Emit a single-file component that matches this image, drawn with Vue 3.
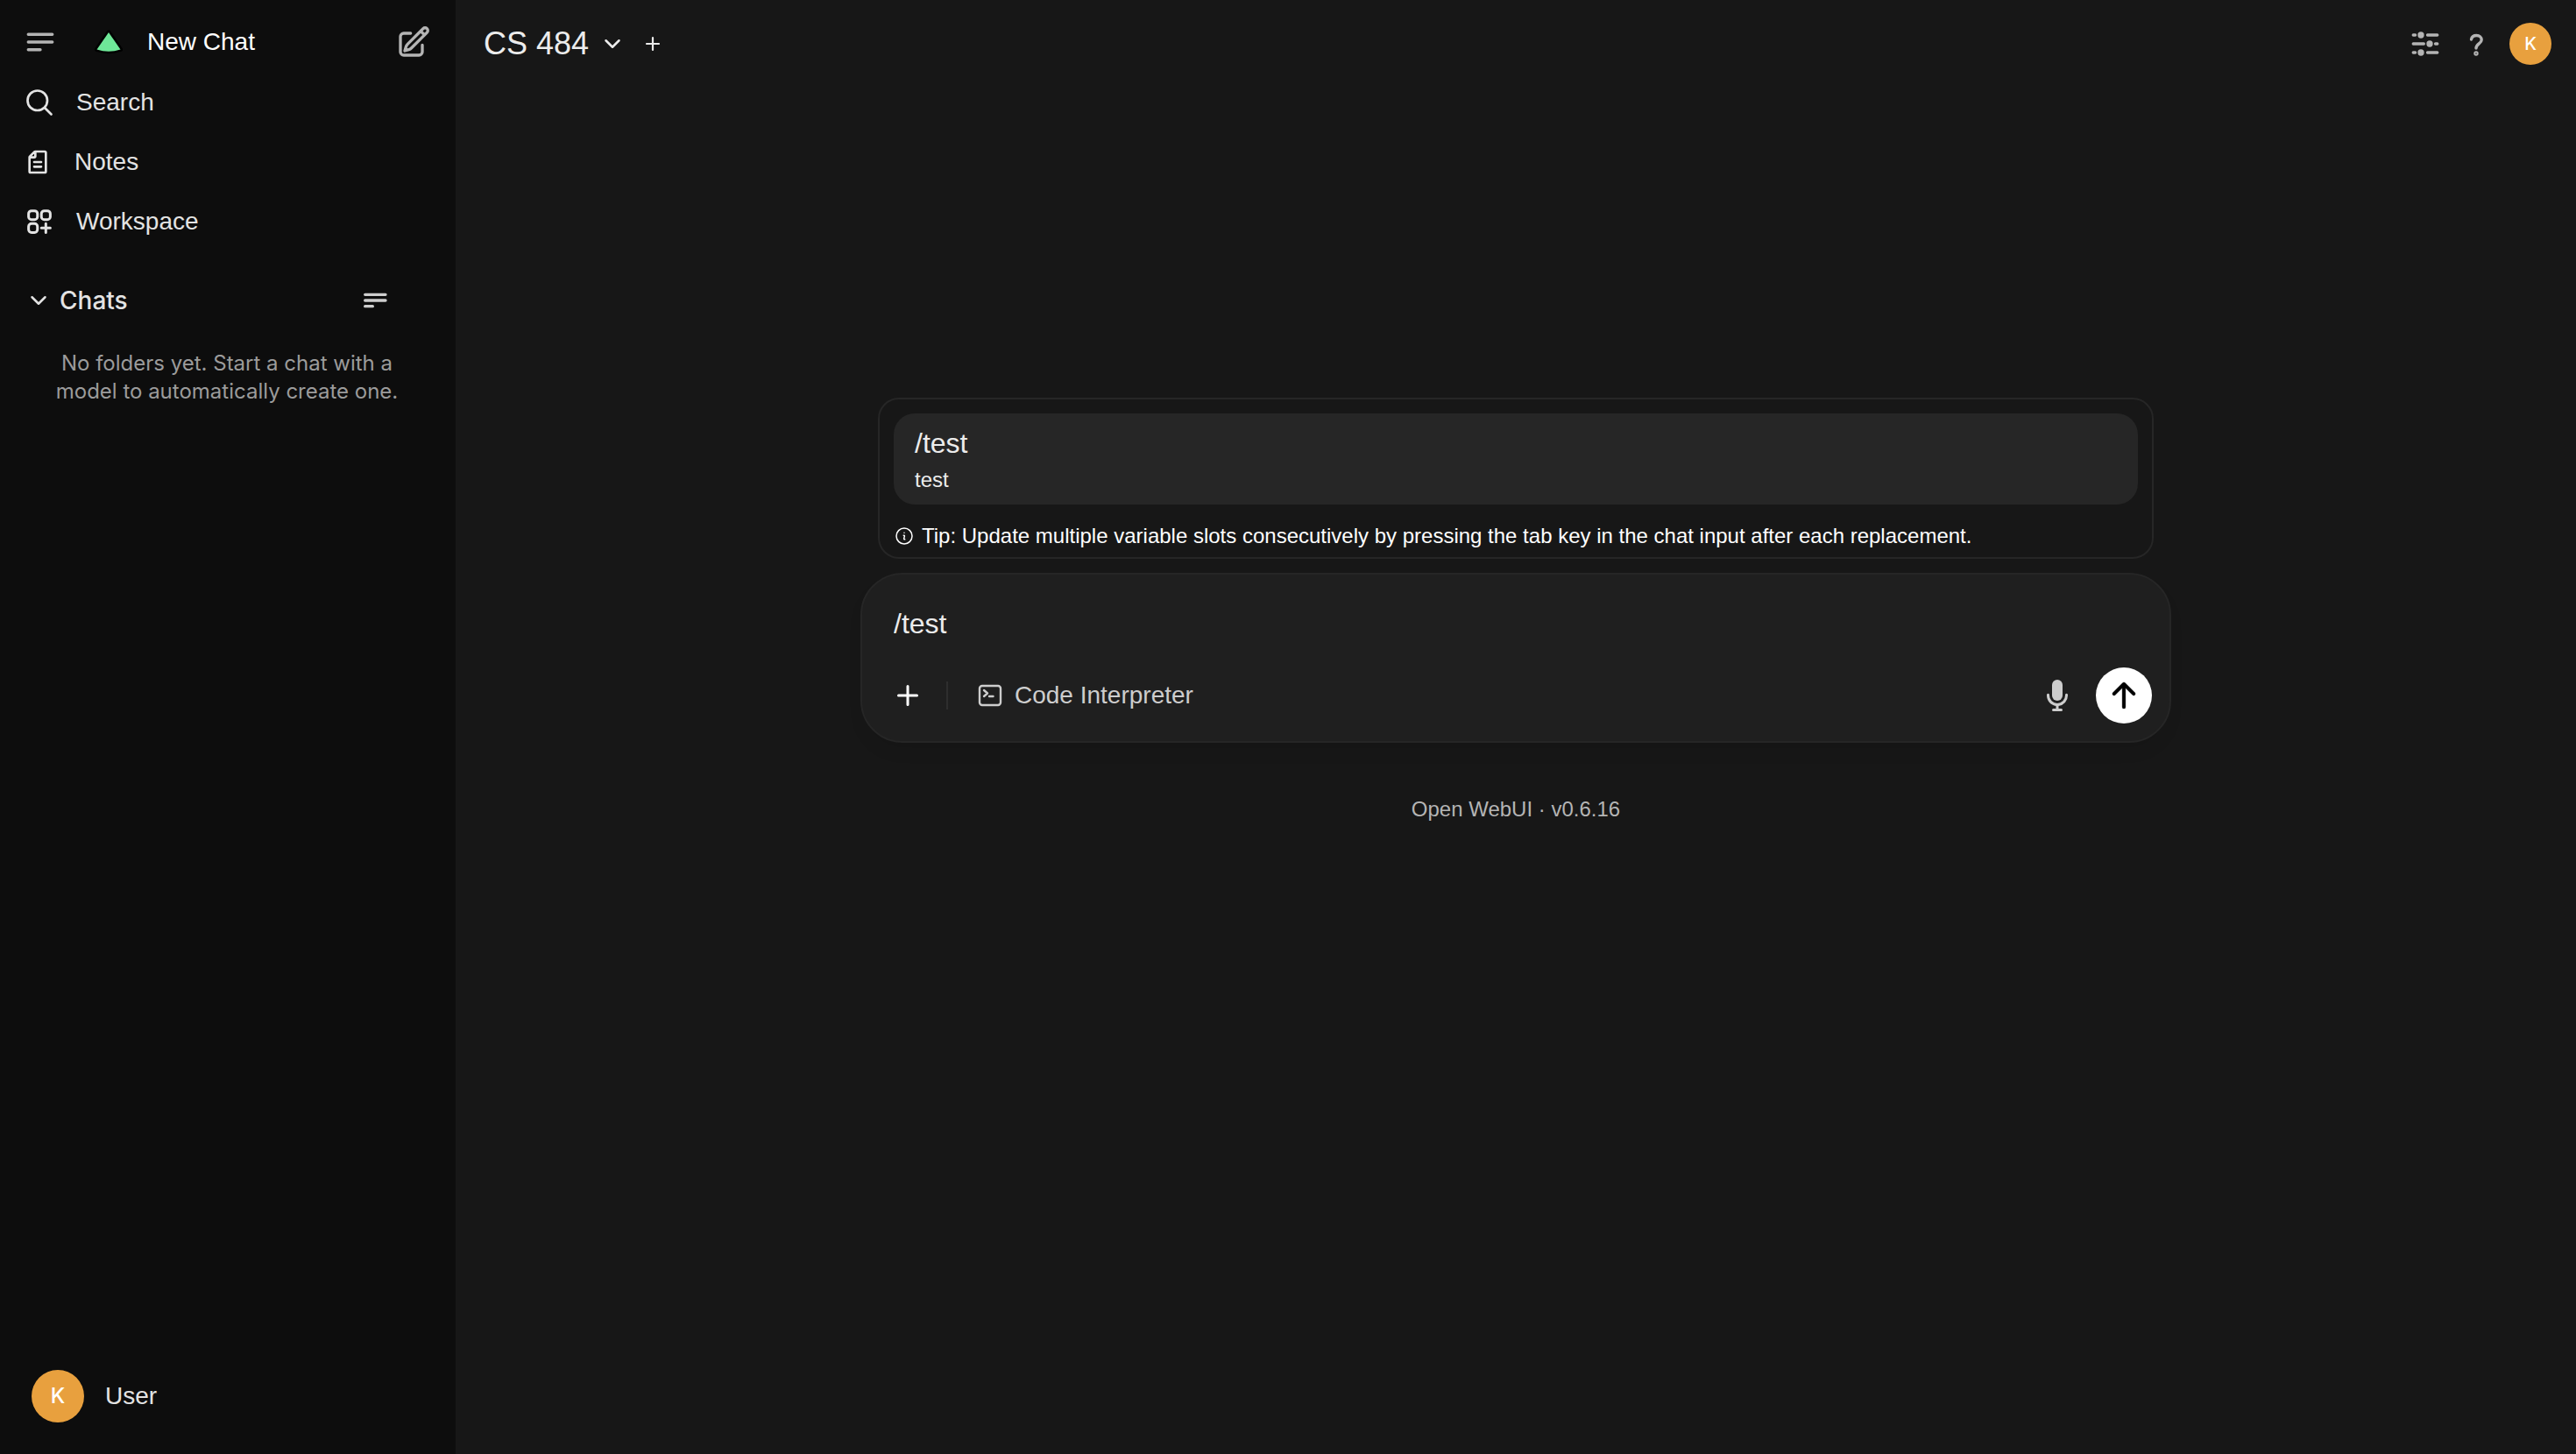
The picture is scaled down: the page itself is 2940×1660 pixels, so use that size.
<script setup>
import { ref } from 'vue'

const prompt = ref('/test')
const tip = 'Tip: Update multiple variable slots consecutively by pressing the tab key in the chat input after each replacement.'
</script>

<template>
  <div class="app">
    <aside class="sidebar">
      <div class="top">
        <button class="icon-btn muted" aria-label="Toggle sidebar">
          <svg class="i40" viewBox="0 0 24 24" fill="none" stroke="currentColor" stroke-width="2" stroke-linecap="round"><path d="M3.750 6.750h16.500M3.750 12h16.500M3.750 17.250H12" /></svg>
        </button>
        <a class="new-chat" href="#">
          <svg class="logo" viewBox="0 0 40 40"><path d="M20 9 6.500 28.500Q20 33 33.500 28.500Z" fill="#6ee798" stroke="#000" stroke-width="5" stroke-linejoin="round" paint-order="stroke" /></svg>
          <span>New Chat</span>
        </a>
        <button class="icon-btn muted" aria-label="New chat">
          <svg class="i40" viewBox="0 0 24 24" fill="none" stroke="currentColor" stroke-width="2" stroke-linecap="round" stroke-linejoin="round"><path d="m16.862 4.487 1.687-1.688a1.875 1.875 0 1 1 2.652 2.652L10.582 16.070a4.500 4.500 0 0 1-1.897 1.130L6 18l.8-2.685a4.500 4.500 0 0 1 1.130-1.897l8.932-8.931Zm0 0L19.500 7.125M18 14v4.750A2.250 2.250 0 0 1 15.750 21H5.250A2.250 2.250 0 0 1 3 18.750V8.250A2.250 2.250 0 0 1 5.250 6H10" /></svg>
        </button>
      </div>

      <nav>
        <a href="#">
          <svg class="i36" viewBox="0 0 24 24" fill="none" stroke="currentColor" stroke-width="1.800" stroke-linecap="round" stroke-linejoin="round"><path d="m21 21-5.197-5.197m0 0A7.500 7.500 0 1 0 5.196 5.196a7.500 7.500 0 0 0 10.607 10.607Z" /></svg>
          <span>Search</span>
        </a>
        <a href="#" class="notes">
          <svg class="i32" viewBox="0 0 24 24" fill="none" stroke="currentColor" stroke-width="2" stroke-linecap="round" stroke-linejoin="round"><path d="M10 3v4a1 1 0 0 1-1 1H5m4 8h6m-6-4h6m4-8v16a1 1 0 0 1-1 1H6a1 1 0 0 1-1-1V7.914a1 1 0 0 1 .293-.707l3.914-3.914A1 1 0 0 1 9.914 3H18a1 1 0 0 1 1 1Z" /></svg>
          <span>Notes</span>
        </a>
        <a href="#">
          <svg class="i36" viewBox="0 0 24 24" fill="none" stroke="currentColor" stroke-width="2" stroke-linecap="round" stroke-linejoin="round"><path d="M13.500 16.875h3.375m0 0h3.375m-3.375 0V13.500m0 3.375v3.375M6 10.500h2.250a2.250 2.250 0 0 0 2.250-2.250V6a2.250 2.250 0 0 0-2.250-2.250H6A2.250 2.250 0 0 0 3.750 6v2.250A2.250 2.250 0 0 0 6 10.500Zm0 9.750h2.250A2.250 2.250 0 0 0 10.500 18v-2.250a2.250 2.250 0 0 0-2.250-2.250H6a2.250 2.250 0 0 0-2.250 2.250V18A2.250 2.250 0 0 0 6 20.250Zm9.750-9.750H18a2.250 2.250 0 0 0 2.250-2.250V6A2.250 2.250 0 0 0 18 3.750h-2.250A2.250 2.250 0 0 0 13.500 6v2.250a2.250 2.250 0 0 0 2.250 2.250Z" /></svg>
          <span>Workspace</span>
        </a>
      </nav>

      <div class="chats-head">
        <button class="chats-toggle">
          <svg class="i24" viewBox="0 0 24 24" fill="none" stroke="currentColor" stroke-width="2.500" stroke-linecap="round" stroke-linejoin="round"><path d="m19.500 8.250-7.500 7.500-7.500-7.500" /></svg>
          <span>Chats</span>
        </button>
        <button class="icon-btn light" aria-label="Chat list options">
          <svg class="i32" viewBox="0 0 24 24" fill="none" stroke="currentColor" stroke-width="2.500" stroke-linecap="round"><path d="M3.500 7h17.500M3.500 12h17.500M3.500 17H10" /></svg>
        </button>
      </div>
      <p class="empty">No folders yet. Start a chat with a<br>model to automatically create one.</p>

      <button class="user">
        <span class="avatar big">K</span>
        <span>User</span>
      </button>
    </aside>

    <main>
      <header>
        <button class="model">
          <span>CS 484</span>
          <svg class="i24" viewBox="0 0 24 24" fill="none" stroke="currentColor" stroke-width="2.500" stroke-linecap="round" stroke-linejoin="round"><path d="m19.500 8.250-7.500 7.500-7.500-7.500" /></svg>
        </button>
        <button class="icon-btn bright" aria-label="Add model">
          <svg class="i24" viewBox="0 0 24 24" fill="none" stroke="currentColor" stroke-width="2.200" stroke-linecap="round"><path d="M12 5v14M5 12h14" /></svg>
        </button>
        <div class="actions">
          <button class="icon-btn muted" aria-label="Controls">
            <svg class="i40" viewBox="0 0 24 24" fill="none" stroke="currentColor" stroke-width="2" stroke-linecap="round" stroke-linejoin="round"><path d="M13.500 6h6.750M3.750 6h1.400M3.750 12h7.250M18.900 12h1.350M13.500 18h6.750M3.750 18h1.400" /><g fill="currentColor"><circle cx="9" cy="6" r="1.200" /><circle cx="15" cy="12" r="1.200" /><circle cx="9" cy="18" r="1.200" /></g></svg>
          </button>
          <button class="icon-btn muted" aria-label="Help">
            <svg class="i40" viewBox="0 0 40 40" fill="none" stroke="currentColor" stroke-width="3.400" stroke-linecap="round" stroke-linejoin="round"><path d="M14.500 15C15 12.300 17.200 10.500 20.500 10.500C24 10.500 26.200 12.700 26.200 15.400C26.200 19.800 20 20 20 25" /><circle cx="20" cy="31" r="1" /></svg>
          </button>
          <button class="avatar" aria-label="Account">K</button>
        </div>
      </header>

      <div class="composer">
        <section class="commands">
          <button class="command">
            <strong>/test</strong>
            <span>test</span>
          </button>
          <p class="tip">
            <svg class="i24" viewBox="0 0 24 24" fill="none" stroke="currentColor" stroke-width="1.500" stroke-linecap="round" stroke-linejoin="round"><path d="m11.250 11.250.041-.020a.750.750 0 0 1 1.063.852l-.708 2.836a.750.750 0 0 0 1.063.853l.041-.021M21 12a9 9 0 1 1-18 0 9 9 0 0 1 18 0Zm-9-3.750h.008v.008H12V8.250Z" /></svg>
            <span>{{ tip }}</span>
          </p>
        </section>

        <form class="input-box" @submit.prevent>
          <input v-model="prompt" type="text" aria-label="Message">
          <div class="tools">
            <button type="button" class="icon-btn white" aria-label="More">
              <svg class="i32" viewBox="0 0 32 32" fill="none" stroke="currentColor" stroke-width="3" stroke-linecap="round"><path d="M16 5.500v21M5.500 16h21" /></svg>
            </button>
            <span class="divider"></span>
            <button type="button" class="code">
              <svg class="i32" viewBox="0 0 32 32" fill="none" stroke="currentColor" stroke-width="2.400" stroke-linecap="round" stroke-linejoin="round"><rect x="4" y="5" width="24" height="22" rx="3" /><path d="m9 10 4 3.500L9 17M15 17h4.500" /></svg>
              <span>Code Interpreter</span>
            </button>
            <button type="button" class="icon-btn light mic" aria-label="Voice input">
              <svg class="i40" viewBox="0 0 20 20" fill="currentColor"><path d="M7 4a3 3 0 0 1 6 0v6a3 3 0 1 1-6 0V4Z" /><path d="M5.500 9.643a.750.750 0 0 0-1.500 0V10c0 3.060 2.290 5.585 5.250 5.954V17.500h-1.500a.750.750 0 0 0 0 1.500h4.500a.750.750 0 0 0 0-1.500h-1.500v-1.546A6.001 6.001 0 0 0 16 10v-.357a.750.750 0 0 0-1.500 0V10a4.500 4.500 0 0 1-9 0v-.357Z" /></svg>
            </button>
            <button class="send" aria-label="Send message">
              <svg class="i40" viewBox="0 0 16 16" fill="currentColor" stroke="currentColor" stroke-width=".15"><path fill-rule="evenodd" d="M8 14a.750.750 0 0 1-.750-.750V4.560L4.030 7.780a.750.750 0 0 1-1.060-1.060l4.500-4.500a.750.750 0 0 1 1.060 0l4.500 4.500a.750.750 0 0 1-1.060 1.060L8.750 4.560v8.690A.750.750 0 0 1 8 14Z" clip-rule="evenodd" /></svg>
            </button>
          </div>
        </form>
        <p class="version">Open WebUI · v0.6.16</p>
      </div>
    </main>
  </div>
</template>

<style>
body {
  background: #171717;
}
</style>

<style scoped>
.app {
  display: flex;
  min-height: 100vh;
  background: #171717;
  color: #ececec;
  font: 28px/40px "Liberation Sans", Arial, sans-serif;
}
button {
  display: flex;
  align-items: center;
  padding: 0;
  border: 0;
  background: none;
  color: inherit;
  font: inherit;
  text-align: left;
  cursor: pointer;
}
a {
  color: inherit;
  text-decoration: none;
}
p {
  margin: 0;
}
svg {
  display: block;
  flex: none;
}
.i24 { width: 24px; height: 24px; }
.i32 { width: 32px; height: 32px; }
.i36 { width: 36px; height: 36px; }
.i40 { width: 40px; height: 40px; }
.muted { color: #b4b4b4; }
.light { color: #cdcdcd; }
.bright { color: #ececec; }
.white { color: #fff; }

.sidebar {
  display: flex;
  flex-direction: column;
  flex: none;
  box-sizing: border-box;
  width: 520px;
  padding: 28px 28px 32px 26px;
  background: #0d0d0d;
  color: #e3e3e3;
}
.top,
.new-chat {
  display: flex;
  align-items: center;
}
.new-chat {
  flex: 1;
  gap: 24px;
  padding-left: 38px;
  color: #fff;
}
.logo {
  width: 40px;
  height: 40px;
}
nav {
  display: flex;
  flex-direction: column;
  gap: 28px;
  padding: 29px 0 0 1px;
}
nav a {
  display: flex;
  align-items: center;
  gap: 24px;
}
nav .notes {
  gap: 26px;
}
.chats-head {
  display: flex;
  align-items: center;
  justify-content: space-between;
  padding: 50px 48px 0 6px;
}
.chats-toggle {
  gap: 12px;
  font-family: Inter, sans-serif;
  font-weight: 500;
}
.empty {
  padding-top: 36px;
  color: #9b9b9b;
  font: 24px/32px Inter, sans-serif;
  text-align: center;
}
.user {
  gap: 24px;
  margin-top: auto;
  padding: 4px 10px;
}
.avatar {
  display: flex;
  align-items: center;
  justify-content: center;
  width: 48px;
  height: 48px;
  border-radius: 50%;
  background: #e8a03e;
  color: #fff;
  font: 500 20px/24px Inter, sans-serif;
}
.avatar.big {
  width: 60px;
  height: 60px;
  font-size: 24px;
}

main {
  flex: 1;
  min-width: 0;
}
header {
  display: flex;
  align-items: center;
  padding: 26px 28px 0 32px;
}
.model {
  gap: 15px;
  margin-right: 22px;
  font-size: 36px;
}
.actions {
  display: flex;
  align-items: center;
  gap: 18px;
  margin-left: auto;
}
.composer {
  max-width: 1496px;
  margin: 380px auto 0;
}
.commands {
  margin: 0 20px;
  padding: 16px 16px 8px;
  border: 2px solid #262626;
  border-radius: 24px;
}
.command {
  flex-direction: column;
  align-items: flex-start;
  gap: 4px;
  box-sizing: border-box;
  width: 100%;
  padding: 12px 24px;
  border-radius: 24px;
  background: #262626;
}
.command strong {
  font-weight: 400;
  font-size: 32px;
  line-height: 44px;
}
.command span {
  font-size: 24px;
  line-height: 32px;
}
.tip {
  display: flex;
  align-items: center;
  gap: 8px;
  padding-top: 20px;
  color: #fff;
  font-size: 24px;
  line-height: 32px;
}
.input-box {
  margin-top: 16px;
  padding: 32px 20px 20px 36px;
  border: 2px solid #262626;
  border-radius: 48px;
  background: #1f1f1f;
  box-shadow: 0 12px 16px #0000000f;
}
.input-box input {
  display: block;
  width: 100%;
  height: 48px;
  padding: 0;
  border: 0;
  outline: 0;
  background: none;
  color: #ececec;
  font: 32px/48px "Liberation Sans", Arial, sans-serif;
}
.tools {
  display: flex;
  align-items: center;
  padding-top: 26px;
}
.divider {
  width: 2px;
  height: 32px;
  margin: 0 32px 0 28px;
  background: #2e2e2e;
}
.code {
  gap: 12px;
  color: #cdcdcd;
}
.mic {
  margin-left: auto;
}
.send {
  justify-content: center;
  width: 64px;
  height: 64px;
  margin-left: 24px;
  border-radius: 50%;
  background: #fff;
  color: #000;
}
.version {
  padding-top: 60px;
  color: #b4b4b4;
  font-size: 24px;
  line-height: 32px;
  text-align: center;
}
</style>
